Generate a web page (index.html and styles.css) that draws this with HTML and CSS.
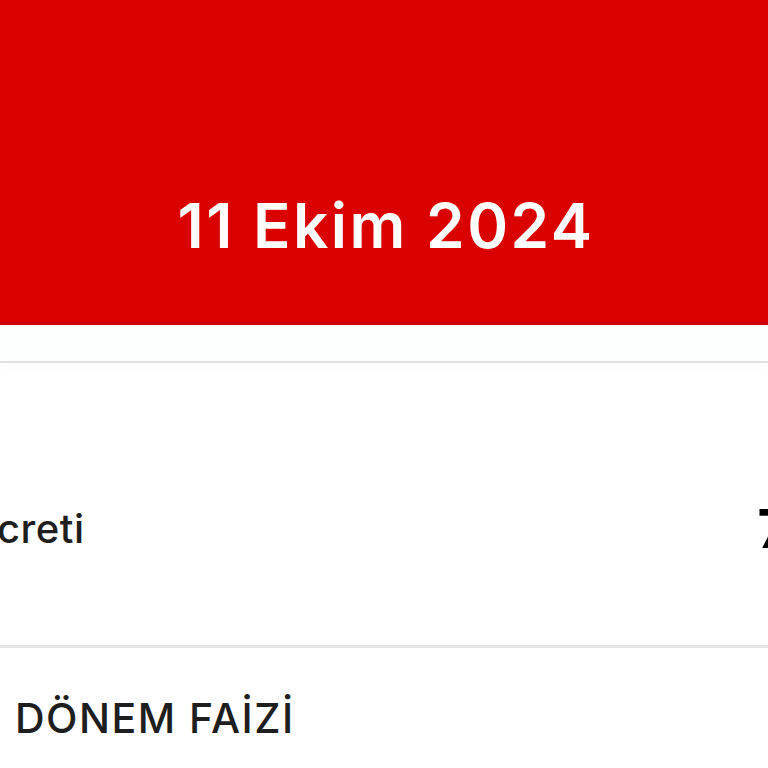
FILE: index.html
```html
<!DOCTYPE html>
<html lang="tr">
<head>
<meta charset="utf-8">
<link rel="stylesheet" href="styles.css">
</head>
<body>
<div class="page">
  <header class="hero">
    <div class="hero-date">11 Ekim 2024</div>
  </header>
  <div class="band"></div>
  <div class="sep-shadow"></div>
  <div class="row">
    <span class="row-label">creti</span>
    <span class="row-value">7</span>
  </div>
  <div class="divider"></div>
  <div class="section">
    <span class="section-title">DÖNEM FAİZİ</span>
  </div>
</div>
</body>
</html>
```
FILE: styles.css
```css
html, body {
  margin: 0;
  padding: 0;
  background: #ffffff;
}
.page {
  width: 768px;
  height: 768px;
  overflow: hidden;
  font-family: "Inter", "Noto Sans", sans-serif;
  color: #1e1e1e;
}
.hero {
  height: 325px;
  background: #da0000;
  border-bottom: 3px solid #c80000;
  display: flex;
  justify-content: center;
  box-sizing: border-box;
  padding-top: 186px;
}
.hero-date {
  color: #ffffff;
  font-size: 62px;
  font-weight: 600;
  line-height: 80px;
  letter-spacing: 2.5px;
  margin-left: 4px;
}
.band {
  height: 36px;
  background: #fdfefe;
}
.sep-shadow {
  height: 2px;
  background: #e0e0e0;
  box-shadow: 0 5px 10px rgba(0,0,0,0.06);
}
.row {
  height: 282px;
  display: flex;
  align-items: center;
  justify-content: space-between;
  padding-top: 48px;
  box-sizing: border-box;
}
.row-label {
  font-size: 40px;
  font-weight: 500;
  margin-left: -3px;
  letter-spacing: 0.5px;
  color: #1e1e1e;
}
.row-value {
  font-size: 54px;
  font-weight: 700;
  color: #000;
  margin-right: -21px;
}
.divider {
  height: 3px;
  background: #e6e6e6;
}
.section {
  padding-left: 15px;
  padding-top: 40px;
}
.section-title {
  font-size: 41px;
  font-weight: 500;
  line-height: 60px;
  letter-spacing: 1.5px;
  color: #1e1e1e;
}
```
